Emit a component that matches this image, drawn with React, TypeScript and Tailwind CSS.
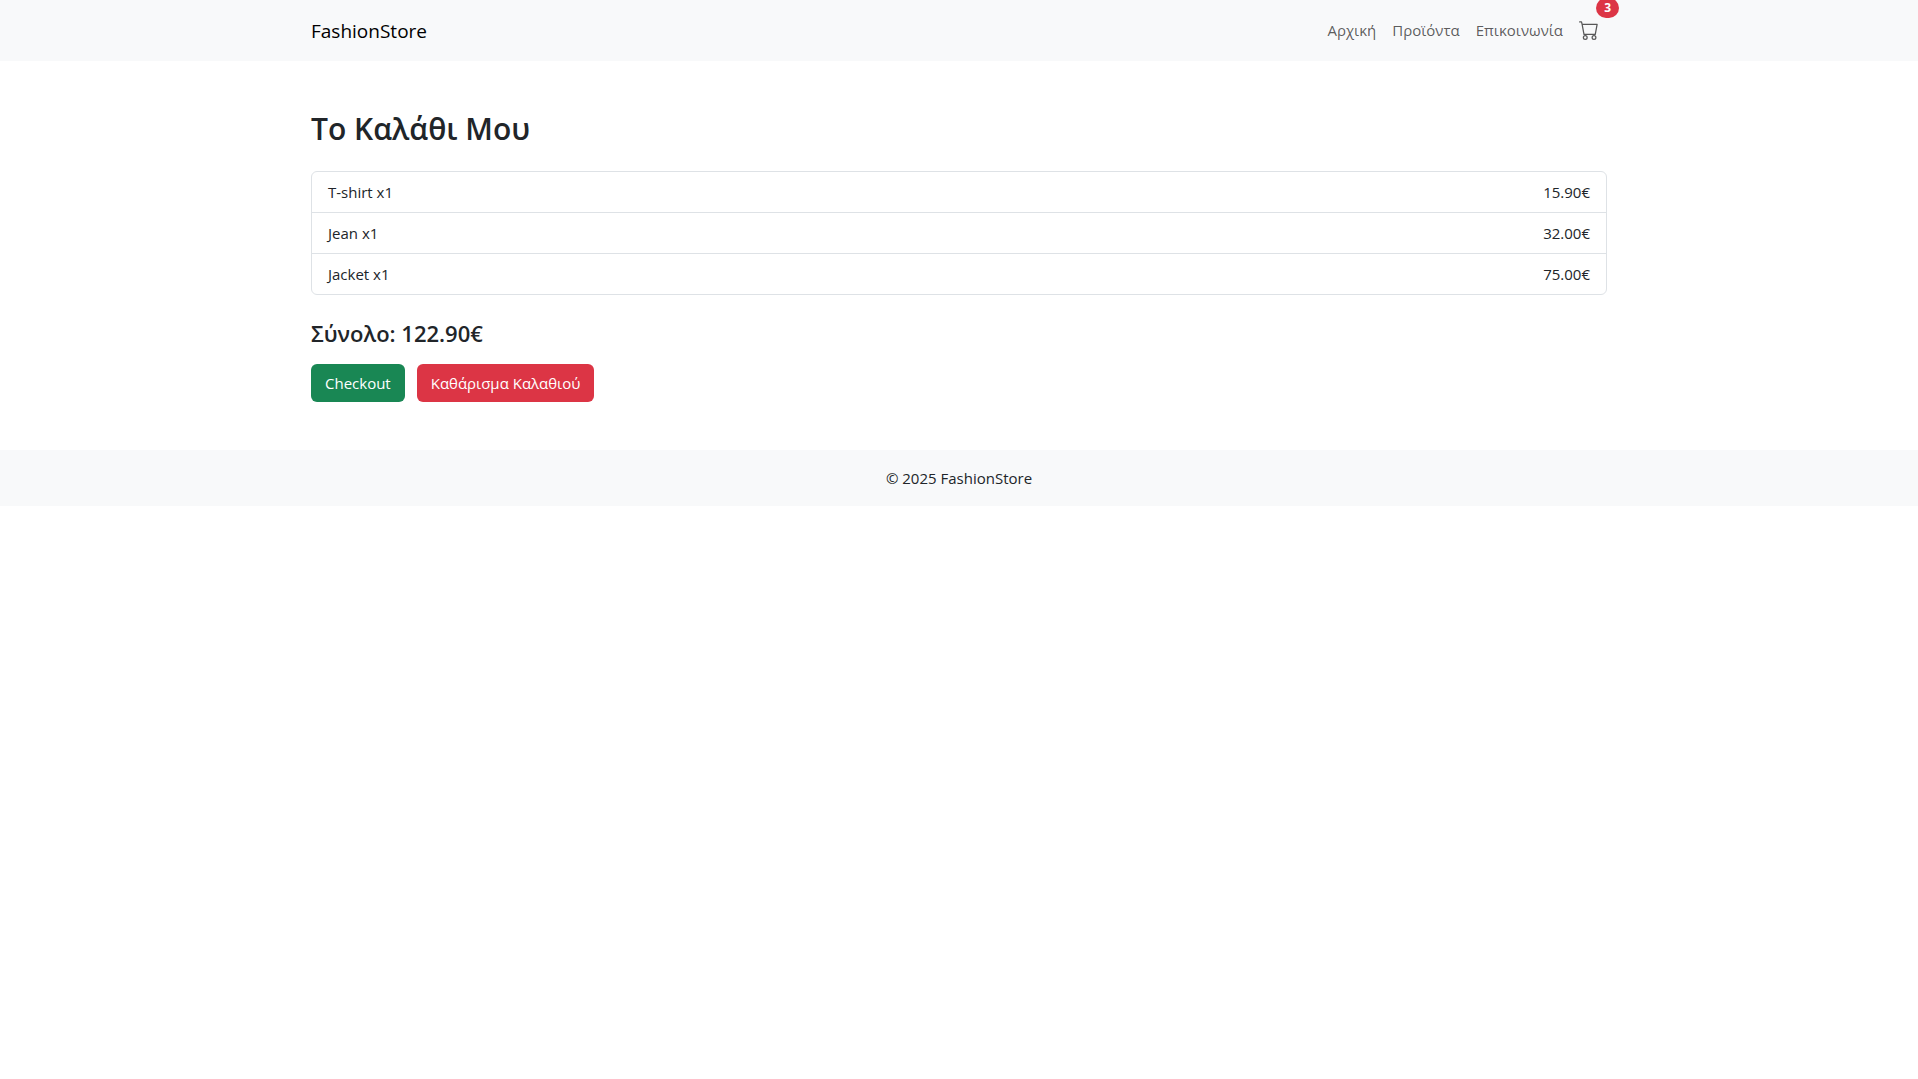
import { BsCart } from "react-icons/bs";

const links = ["Αρχική", "Προϊόντα", "Επικοινωνία"];

const items = [
  { name: "T-shirt", qty: 1, price: "15.90€" },
  { name: "Jean", qty: 1, price: "32.00€" },
  { name: "Jacket", qty: 1, price: "75.00€" },
];

export default function App() {
  return (
    <div className="font-['Open_Sans','Noto_Sans',sans-serif] text-[15px] leading-6 text-[#212529]">
      <nav className="bg-[#f8f9fa] py-2">
        <div className="mx-auto flex min-h-[45px] max-w-[1320px] items-center justify-between px-3">
          <a href="#" className="py-1 text-[19px] leading-[30px] text-black">FashionStore</a>
          <ul className="flex items-center pb-0.5">
            {links.map((label) => (
              <li key={label}>
                <a href="#" className="block p-2 text-black/65">{label}</a>
              </li>
            ))}
            <li>
              <a href="#" aria-label="Cart" className="relative block p-2 text-black/65">
                <BsCart className="my-0.5 size-5" />
                <span className="absolute -top-3 -right-3 rounded-full bg-[#dc3545] px-2 py-1 text-xs leading-3 font-bold text-white">3</span>
              </a>
            </li>
          </ul>
        </div>
      </nav>

      <main className="mx-auto my-12 max-w-[1320px] px-3">
        <h2 className="mb-6 pt-0.5 text-[30px] leading-9 font-semibold">Το Καλάθι Μου</h2>
        <ul className="mb-6 divide-y divide-[#dee2e6] rounded-md border border-[#dee2e6]">
          {items.map((item) => (
            <li key={item.name} className="flex justify-between px-4 py-2">
              <span>{item.name} x{item.qty}</span>
              <span>{item.price}</span>
            </li>
          ))}
        </ul>
        <h4 className="mb-4 text-[22px] leading-[29px] font-semibold">Σύνολο: 122.90€</h4>
        <div className="flex gap-3">
          <button className="rounded-md bg-[#198754] px-3.5 py-[7px] text-white">Checkout</button>
          <button className="rounded-md bg-[#dc3545] px-3.5 py-[7px] text-white">Καθάρισμα Καλαθιού</button>
        </div>
      </main>

      <footer className="bg-[#f8f9fa] py-4 text-center">© 2025 FashionStore</footer>
    </div>
  );
}
